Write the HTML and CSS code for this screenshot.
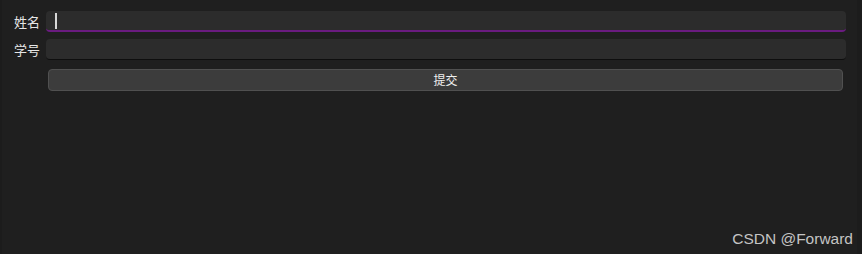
FILE: index.html
```html
<!DOCTYPE html>
<html lang="zh">
<head>
<meta charset="utf-8">
<title>表单</title>
<link rel="stylesheet" href="styles.css">
</head>
<body>
<div class="window">
  <div class="form">
    <label class="label">姓名</label>
    <div class="field focused"><span class="caret"></span></div>
    <label class="label">学号</label>
    <div class="field"></div>
    <div class="spacer"></div>
    <button class="submit">提交</button>
  </div>
  <div class="watermark">CSDN @Forward</div>
</div>
</body>
</html>
```
FILE: styles.css
```css
html, body {
  margin: 0;
  padding: 0;
  background: #1c1c1c;
}
.window {
  box-sizing: border-box;
  height: 254px;
  margin-left: 2px;
  width: 855px;
  background: #1f1f1f;
  display: flex;
  flex-direction: column;
  font-family: "Noto Sans CJK SC", "Noto Sans", sans-serif;
}
.form {
  display: grid;
  grid-template-columns: 38px 800px;
  column-gap: 6px;
  row-gap: 7px;
  padding-top: 11px;
  align-items: center;
}
.label {
  color: #e6e6e6;
  font-size: 13px;
  line-height: 21px;
  text-align: right;
}
.field {
  box-sizing: border-box;
  height: 21px;
  background: #2c2c2c;
  border-radius: 4px;
  border-bottom: 1px solid #0e0e0e;
  display: flex;
  align-items: center;
}
.field.focused {
  border-bottom: 2px solid #6a1b80;
}
.caret {
  display: block;
  width: 2px;
  height: 16px;
  margin-left: 9px;
  background: #d8d8d8;
}
.submit {
  box-sizing: border-box;
  margin: 2px 3px 0 2px;
  height: 22px;
  background: #3c3c3c;
  border: 1px solid #505050;
  border-radius: 4px;
  color: #f0f0f0;
  font-family: "Noto Sans CJK SC", "Noto Sans", sans-serif;
  font-size: 12px;
  line-height: 18px;
  padding: 0;
}
.watermark {
  margin-top: auto;
  text-align: right;
  padding: 0 4px 6px 0;
  color: #c4c4c4;
  font-family: "Liberation Sans", Arial, sans-serif;
  font-size: 15.5px;
  line-height: 18px;
}
```
